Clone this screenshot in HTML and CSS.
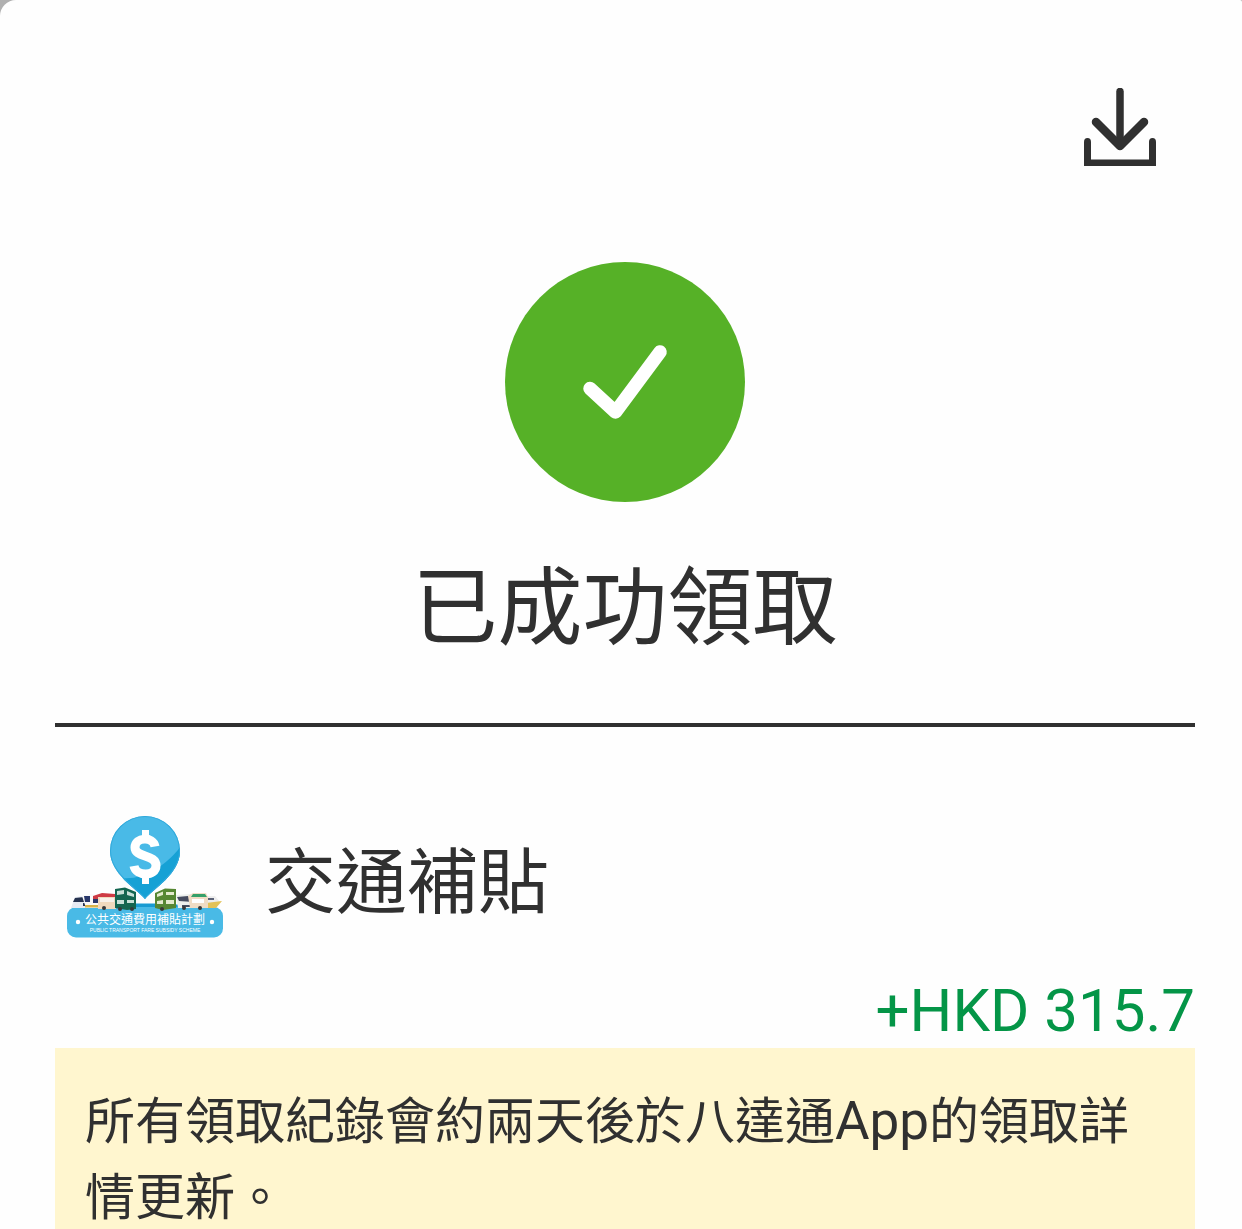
FILE: index.html
```html
<!DOCTYPE html>
<html lang="zh-Hant-HK">
<head>
<meta charset="utf-8">
<meta name="viewport" content="width=device-width, initial-scale=1">
<title>已成功領取</title>
<link rel="stylesheet" href="styles.css">
</head>
<body>
<main class="sheet">
  <header class="toolbar">
    <button class="download" type="button" aria-label="下載">
      <svg class="download-icon" viewBox="0 0 72 78" aria-hidden="true">
        <path d="M36 3.500V56" fill="none" stroke="#303030" stroke-width="7.500" stroke-linecap="round"/>
        <path d="M12 34 36 58 60 34" fill="none" stroke="#303030" stroke-width="8.500" stroke-linecap="round" stroke-linejoin="round"/>
        <path d="M0 78V54Q0 50 3.500 50T7 54V71.500H65V54Q65 50 68.500 50T72 54V78Z" fill="#303030"/>
      </svg>
    </button>
  </header>
  <section class="result">
    <svg class="status" viewBox="0 0 240 240" aria-hidden="true">
      <circle cx="120" cy="120" r="120" fill="#56b127"/>
      <path d="M85 126.500 110.500 150 155 90" fill="none" stroke="#fff" stroke-width="13.500" stroke-linecap="round" stroke-linejoin="round"/>
    </svg>
    <h1 class="title">已成功領取</h1>
  </section>
  <section class="scheme">
    <svg class="scheme-logo" viewBox="0 0 180 145" role="img" aria-label="公共交通費用補貼計劃">
      <defs>
        <clipPath id="pin"><path d="M90 94C82 84 55 69 55 46A35 35 0 0 1 125 46C125 69 98 84 90 94Z"/></clipPath>
      </defs>
      <path d="M22 103C60 97 120 97 158 103Z" fill="#199bd2"/>
      <g clip-path="url(#pin)">
        <path d="M50 8H130V96H50Z" fill="#49bae7"/>
        <path d="M66 73C88 76 112 60 126 41V96H66Z" fill="#16a1d5"/>
        <path d="M90 94C82 84 55 69 55 46A35 35 0 0 1 125 46C125 69 98 84 90 94Z" fill="none" stroke="#31a9db" stroke-width="2"/>
      </g>
      <path d="M100 41.500C98 31 80 32 80 42.500C80 53 101 49 101 60.500C101 72 81 71.500 79 61" fill="none" stroke="#fff" stroke-width="9"/>
      <path d="M87 25H94V35H87ZM87 69H94V79H87Z" fill="#fff"/>
      <rect x="12" y="102" width="156" height="30.500" rx="9" fill="#49bae6"/>
      <path d="M16 103 20 92 30 91 38 93V103Z" fill="#e6eaf2"/>
      <path d="M20 93 29 92V97H18ZM28 98H39V101H28Z" fill="#26324f"/>
      <path d="M27 91 35 89 46 90V103H31Z" fill="#fafafa"/>
      <path d="M29 91H35V97H30ZM38 92H43V98H38Z" fill="#29386b"/>
      <path d="M30 100H43V102.500H30Z" fill="#d9b44a"/>
      <path d="M38 91 47 88 60 89V94H38Z" fill="#ce3b44"/>
      <path d="M43 92H61V104H43Z" fill="#f0d9bd"/>
      <path d="M45 93H59V97H45Z" fill="#f8f1e9"/>
      <path d="M60 84 70 82.500 81 87V104L72 105 60 103Z" fill="#146650"/>
      <path d="M62 86 69 85V89L62 90ZM72 86 79 89V92L72 90ZM62 95H69V99H62ZM72 95H79V98H72Z" fill="#c7e0d7"/>
      <path d="M100 88 110 83.500 121 84V103L108 105 100 103Z" fill="#568733"/>
      <path d="M102 89 108 86.500V90L102 92ZM111 87H119V90H111ZM102 96 108 95V99H102ZM111 95H119V99H111Z" fill="#e3eacd"/>
      <path d="M121 90 136 89 139 103H123Z" fill="#edf0ee"/>
      <path d="M122 92 133 91 138 97 124 96ZM127 100H139V102H127Z" fill="#464c60"/>
      <path d="M148 91 160 91 165 97 156 103H142Z" fill="#ededed"/>
      <path d="M149 93H159V95H149Z" fill="#5b6277"/>
      <path d="M151 98 167 96 161 103H147Z" fill="#e2c258"/>
      <path d="M133 91 138 88H151L153 92V103H135Z" fill="#f0dcc4"/>
      <path d="M138 89H150L152 92H136Z" fill="#35a06a"/>
      <path d="M137 94H149V98H137Z" fill="#fff"/>
      <g fill="#383838"><circle cx="49" cy="103" r="2"/><circle cx="65" cy="104" r="2"/><circle cx="77" cy="104" r="2"/><circle cx="107" cy="104" r="2"/><circle cx="129" cy="103" r="2"/><circle cx="145" cy="103" r="2"/></g>
      <g fill="#fff" text-anchor="middle">
        <circle cx="23" cy="117" r="2.200"/>
        <circle cx="157" cy="117" r="2.200"/>
        <text class="logo-name" x="90" y="119">公共交通費用補貼計劃</text>
        <text class="logo-caption" x="90" y="127">PUBLIC TRANSPORT FARE SUBSIDY SCHEME</text>
      </g>
    </svg>
    <h2 class="scheme-title">交通補貼</h2>
  </section>
  <p class="amount">+HKD 315.7</p>
  <p class="note">所有領取紀錄會約兩天後於八達通<span class="latin">App</span>的領取詳情更新。</p>
</main>
</body>
</html>
```
FILE: styles.css
```css
* {
  box-sizing: border-box;
}

body {
  margin: 0;
  height: 100vh;
  overflow: hidden;
  background: #b0b0b0;
  color: #303030;
  font-family: Roboto, "Noto Sans CJK TC", sans-serif;
}

h1,
h2,
p {
  margin: 0;
  font-weight: 400;
}

.sheet {
  min-height: 100vh;
  padding: 88px 47px 0 55px;
  border-radius: 16px 2px 0 0;
  background: #fefefe;
}

.toolbar {
  display: flex;
  justify-content: flex-end;
  padding-right: 39px;
}

.download {
  padding: 0;
  border: 0;
  background: none;
  cursor: pointer;
}

.download-icon {
  display: block;
  width: 72px;
  height: 78px;
}

.result {
  display: flex;
  flex-direction: column;
  align-items: center;
  gap: 44px;
  padding: 96px 0 51px;
  border-bottom: 4px solid #303030;
}

.status {
  width: 240px;
  height: 240px;
}

.title {
  font-size: 85px;
  line-height: 126px;
}

.scheme {
  display: flex;
  align-items: flex-end;
  gap: 30px;
  padding: 78px 0 24px;
}

.scheme-logo {
  flex: none;
  width: 180px;
  height: 145px;
}

.logo-name {
  font-size: 12px;
}

.logo-caption {
  font-family: "Liberation Sans", sans-serif;
  font-size: 5px;
}

.scheme-title {
  font-size: 71px;
  line-height: 134px;
}

.amount {
  color: #049547;
  font-size: 60px;
  line-height: 74px;
  text-align: right;
}

.note {
  padding: 36px 30px;
  background: #fff6cf;
  font-size: 50px;
  line-height: 76px;
}

.latin {
  font-size: 53px;
  line-height: 1;
}
```
